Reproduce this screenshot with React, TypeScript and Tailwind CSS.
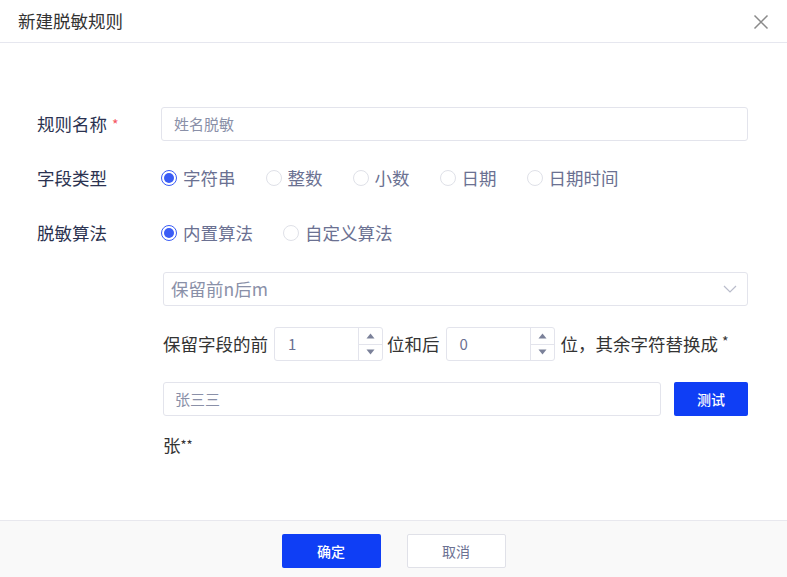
import React from "react";

const RadioDot = ({ checked }: { checked: boolean }) =>
  checked ? (
    <span className="w-4 h-4 rounded-full border border-[#3a5cf5] flex items-center justify-center shrink-0">
      <span className="w-[10px] h-[10px] rounded-full bg-[#3a5cf5]" />
    </span>
  ) : (
    <span className="w-4 h-4 rounded-full border border-[#dfe1e8] bg-white shrink-0" />
  );

const Radio = ({ label, checked = false }: { label: string; checked?: boolean }) => (
  <label className="flex items-center gap-[6px] mr-[30px] text-[17.5px] text-[#6b7192]">
    <RadioDot checked={checked} />
    <span>{label}</span>
  </label>
);

const Stepper = ({ value }: { value: string }) => (
  <div className="flex w-[109px] h-[34px] border border-[#e3e4ec] rounded-[3px] bg-white">
    <div className="flex-1 flex items-center pl-[13px] text-[15px] text-[#6b7192]">{value}</div>
    <div className="w-[24px] border-l border-[#e3e4ec] flex flex-col">
      <div className="flex-1 flex items-center justify-center border-b border-[#e3e4ec]">
        <svg width="9" height="6" viewBox="0 0 9 6">
          <path d="M0.5 5.5 L4.5 0.5 L8.5 5.5 Z" fill="#7b8199" />
        </svg>
      </div>
      <div className="flex-1 flex items-center justify-center">
        <svg width="9" height="6" viewBox="0 0 9 6">
          <path d="M0.5 0.5 L4.5 5.5 L8.5 0.5 Z" fill="#7b8199" />
        </svg>
      </div>
    </div>
  </div>
);

export default function App() {
  return (
    <div
      className="w-[787px] h-[577px] bg-white flex flex-col overflow-hidden"
      style={{ fontFamily: '"Noto Sans CJK SC", "Noto Sans", sans-serif' }}
    >
      {/* header */}
      <div className="h-[43px] shrink-0 border-b border-[#e6e7ef] flex items-center justify-between pl-[18px] pr-[18px]">
        <span className="text-[17.5px] text-[#333333]">新建脱敏规则</span>
        <svg width="16" height="16" viewBox="0 0 16 16" className="mt-[1px]">
          <path d="M1.5 1.5 L14.5 14.5 M14.5 1.5 L1.5 14.5" stroke="#8a8a8a" strokeWidth="1.5" />
        </svg>
      </div>

      {/* body */}
      <div className="flex-1 pt-[64px] pl-[37px] pr-[39px] flex flex-col gap-[21px]">
        <div className="flex items-center h-[34px]">
          <div className="w-[124px] text-[17.5px] text-[#2b3250] flex items-center">
            规则名称<span className="text-[#f5555f] ml-[5px] text-[14px]">*</span>
          </div>
          <div className="flex-1 h-[34px] border border-[#e3e4ec] rounded-[3px] flex items-center pl-[12px] text-[15px] text-[#8a90a8]">
            姓名脱敏
          </div>
        </div>

        <div className="flex items-center h-[34px] -mt-[1px]">
          <div className="w-[124px] text-[17.5px] text-[#2b3250]">字段类型</div>
          <div className="flex items-center">
            <Radio label="字符串" checked />
            <Radio label="整数" />
            <Radio label="小数" />
            <Radio label="日期" />
            <Radio label="日期时间" />
          </div>
        </div>

        <div className="flex items-center h-[34px]">
          <div className="w-[124px] text-[17.5px] text-[#2b3250]">脱敏算法</div>
          <div className="flex items-center">
            <Radio label="内置算法" checked />
            <Radio label="自定义算法" />
          </div>
        </div>

        <div className="pl-[126px] flex flex-col gap-[21px] mt-[1px]">
          <div className="h-[34px] border border-[#e3e4ec] rounded-[3px] flex items-center justify-between pl-[7px] pr-[10px]">
            <span className="text-[17.5px] text-[#8a90a8]">保留前n后m</span>
            <svg width="14" height="8" viewBox="0 0 14 8">
              <path d="M1 1 L7 7 L13 1" stroke="#b9bccb" strokeWidth="1.2" fill="none" />
            </svg>
          </div>

          <div className="h-[34px] flex items-center text-[17.5px] text-[#333333]">
            <span className="mr-[6px]">保留字段的前</span>
            <Stepper value="1" />
            <span className="ml-[4px] mr-[6px]">位和后</span>
            <Stepper value="0" />
            <span className="ml-[6px]">
              位，其余字符替换成 <span className="text-[14px] align-top">*</span>
            </span>
          </div>

          <div className="h-[34px] flex items-center gap-[13px]">
            <div className="flex-1 h-[34px] border border-[#e3e4ec] rounded-[3px] flex items-center pl-[11px] text-[15px] text-[#8a90a8]">
              张三三
            </div>
            <button className="w-[74px] h-[34px] rounded-[2px] bg-[#0f3ef5] text-white text-[14px] font-medium">
              测试
            </button>
          </div>

          <div className="text-[17.5px] text-[#333333] leading-5 -mt-[2px]">
            张<span className="text-[13px] align-top">**</span>
          </div>
        </div>
      </div>

      {/* footer */}
      <div className="h-[57px] shrink-0 border-t border-[#e8e8ee] bg-[#f9f9f9] flex items-start justify-center gap-[26px] pt-[13px]">
        <button className="w-[99px] h-[34px] rounded-[2px] bg-[#0f3ef5] text-white text-[14px] font-medium">
          确定
        </button>
        <button className="w-[99px] h-[34px] rounded-[2px] bg-white border border-[#e0e1e8] text-[#6b7192] text-[14px]">
          取消
        </button>
      </div>
    </div>
  );
}
